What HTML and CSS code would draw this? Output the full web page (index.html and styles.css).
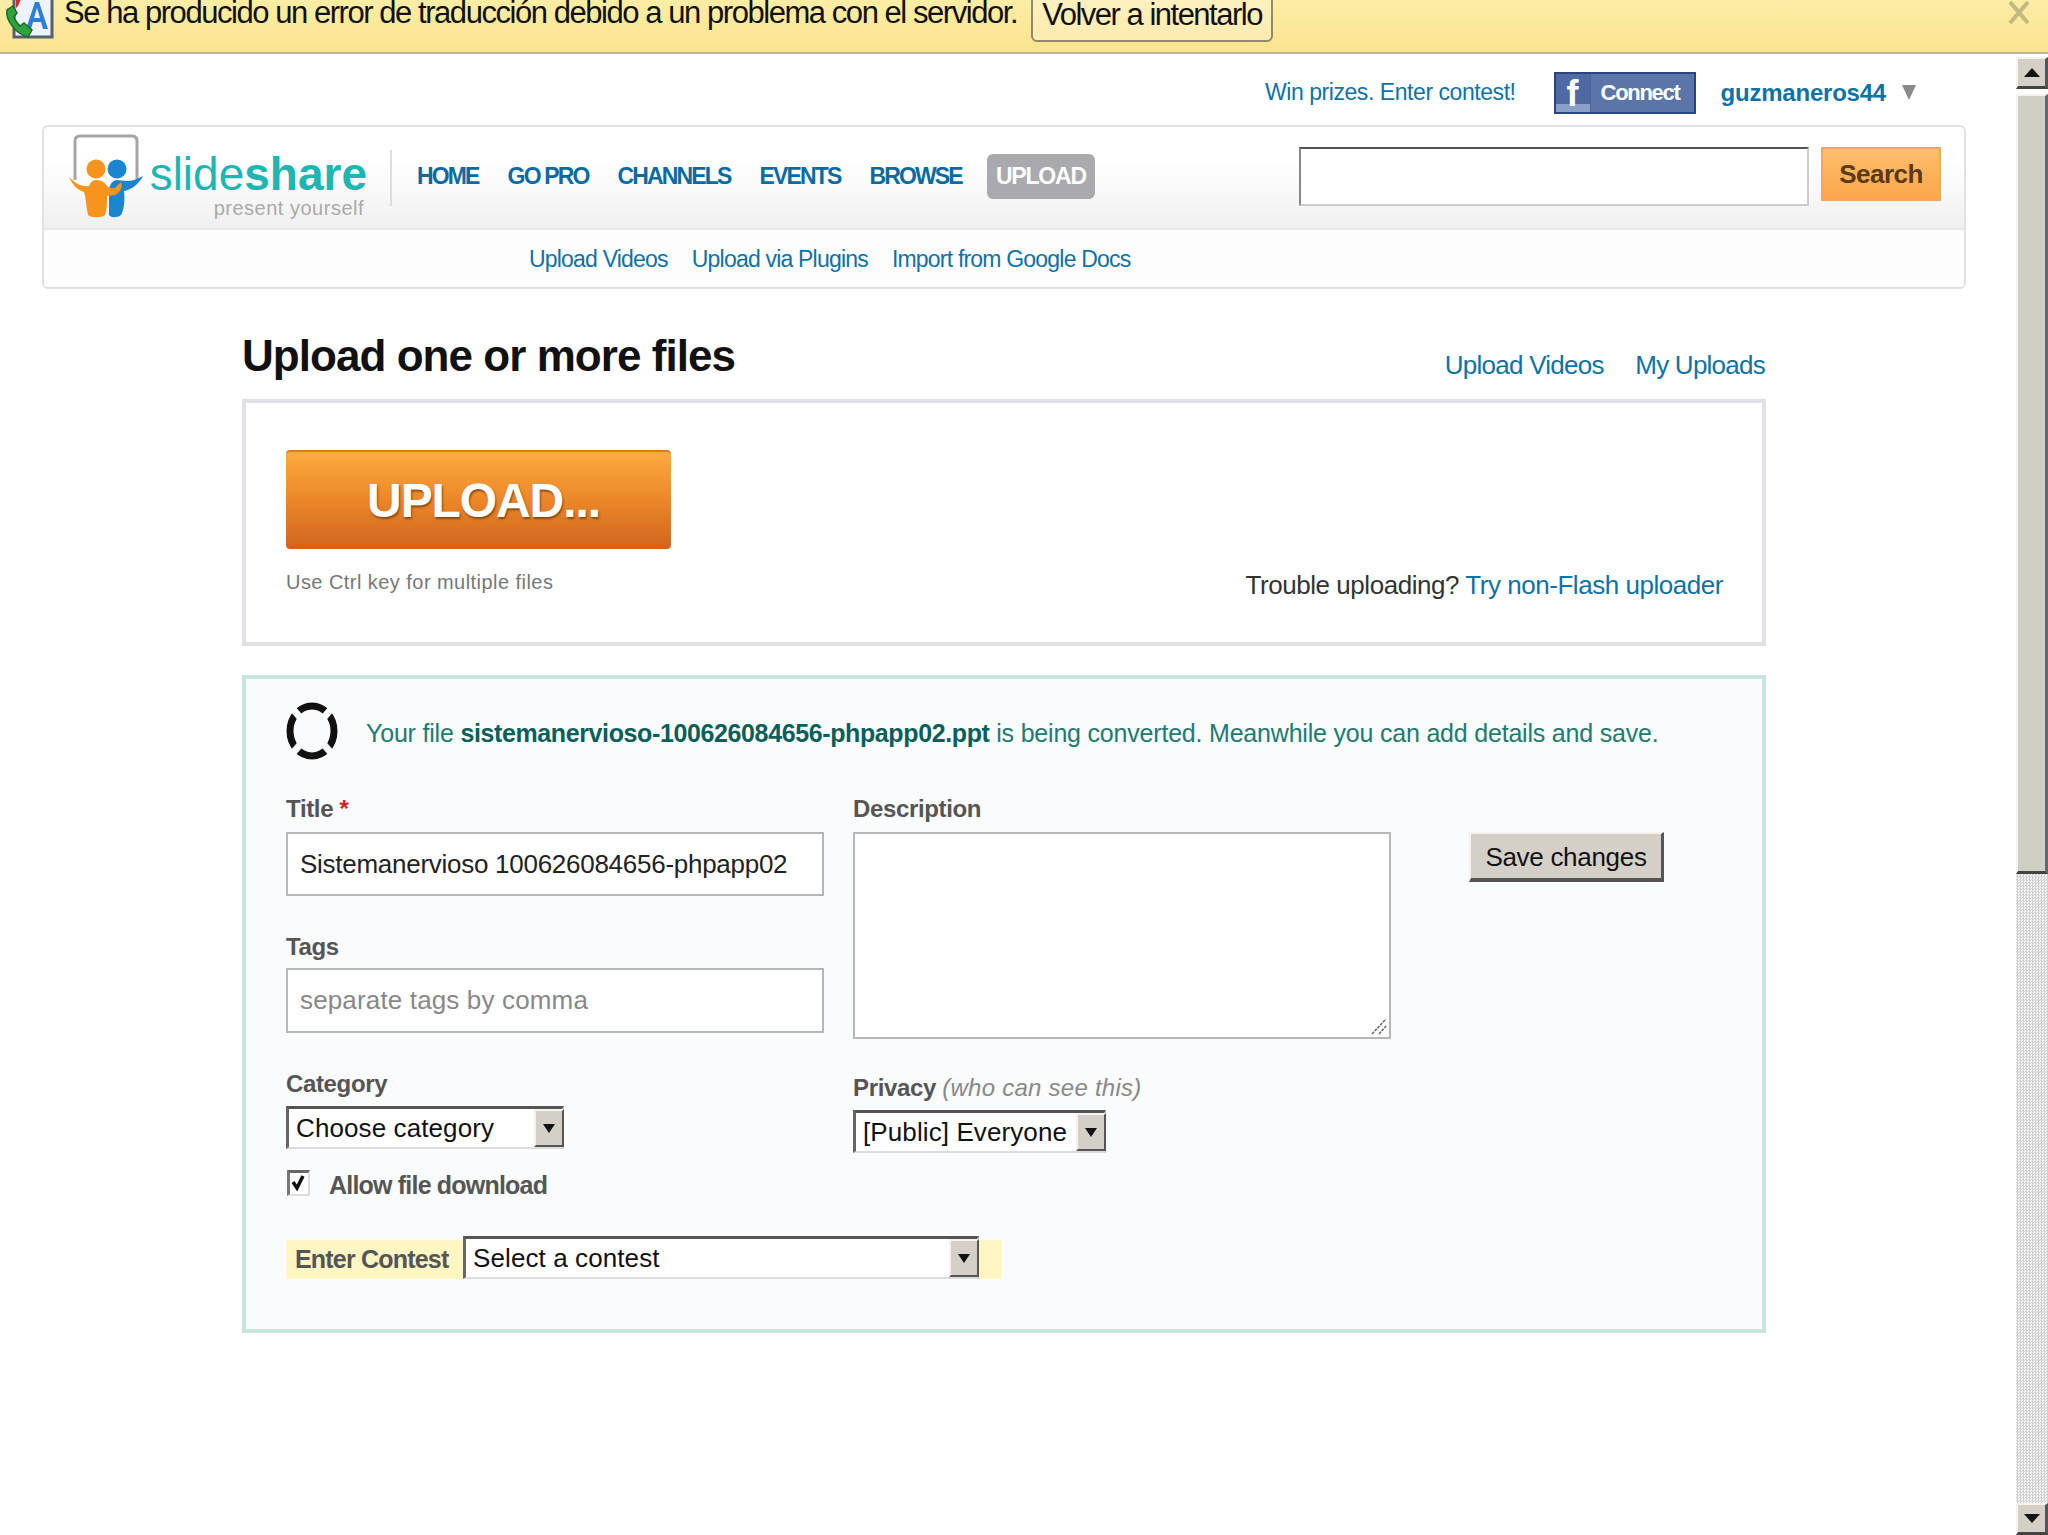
FILE: index.html
```html
<!DOCTYPE html>
<html lang="en">
<head>
    <meta charset="UTF-8">
    <title>Upload one or more files - SlideShare</title>
    <link rel="stylesheet" href="styles.css">
</head>
<body>
    <!-- Browser translation bar -->
    <div class="translate-bar">
        <svg class="translate-icon" width="50" height="46" viewBox="0 0 50 46">
            <rect x="10" y="-6" width="38" height="47" fill="#eef3fb" stroke="#56606e" stroke-width="3"/>
            <path d="M12 -4 L20 -4 L14 10 L12 12 Z" fill="#d22b2b"/>
            <path d="M22 33 L31 6 L35 6 L44 33 L39 33 L37 26 L29 26 L27 33 Z M30 22 L36 22 L33 12 Z" fill="#2f7fd6" fill-rule="evenodd"/>
            <path d="M3 14 C1 24 12 38 24 41 L28 34 L20 27 L16 30 C13 27 11 24 10 21 L13 17 L9 10 Z" fill="#2fa33b" stroke="#1c6a2b" stroke-width="1.5"/>
        </svg>
        <span class="translate-text">Se ha producido un error de traducción debido a un problema con el servidor.</span>
        <span class="translate-retry">Volver a intentarlo</span>
        <svg class="translate-close" width="22" height="24" viewBox="0 0 22 24">
            <path d="M2 2 L20 23 M20 2 L2 23" stroke="#c2b983" stroke-width="4"/>
        </svg>
    </div>

    <div class="window">
        <div class="page">
            <div class="user-bar">
                <a class="contest-link">Win prizes. Enter contest!</a>
                <span class="fb-connect">
                    <span class="fb-logo">f</span>
                    <span class="fb-label">Connect</span>
                </span>
                <a class="user-name">guzmaneros44</a>
                <span class="user-arrow"></span>
            </div>

            <div class="site-header">
                <div class="header-main">
                    <svg class="logo-mark" width="74" height="86" viewBox="0 0 74 86">
                        <path d="M6 46 L6 7 Q6 2 11 2 L63 2 Q68 2 68 7 L68 46" fill="#fff" stroke="#a6a6a6" stroke-width="3"/>
                        <circle cx="27" cy="35" r="9.5" fill="#f7941e"/>
                        <circle cx="48" cy="35" r="9.5" fill="#1a86cf"/>
                        <path d="M74 42 C70 50 62 56 55 57 C56 66 55 76 52 81 C48 84 42 84 40 81 L40 58 C40 50 44 46 48 46 C54 46 60 50 74 42 Z" fill="#1a86cf"/>
                        <path d="M0 43 C8 51 14 53 20 52 C22 47 25 46 27 46 C33 46 36 49 38 52 C42 55 46 55 48 52 L52 48 C54 52 52 58 46 61 L38 62 C38 68 38 76 36 81 C32 84 22 84 19 81 C17 72 17 64 15 58 C8 56 3 50 0 43 Z" fill="#f7941e"/>
                    </svg>
                    <div class="logo-text">
                        <div class="logo-name">slide<b>share</b></div>
                        <div class="logo-tag">present yourself</div>
                    </div>
                    <div class="header-sep"></div>
                    <nav class="main-nav">
                        <a>HOME</a>
                        <a>GO PRO</a>
                        <a>CHANNELS</a>
                        <a>EVENTS</a>
                        <a>BROWSE</a>
                        <a class="nav-upload">UPLOAD</a>
                    </nav>
                    <input class="search-input" type="text">
                    <span class="search-btn">Search</span>
                </div>
                <div class="sub-nav">
                    <a>Upload Videos</a>
                    <a>Upload via Plugins</a>
                    <a>Import from Google Docs</a>
                </div>
            </div>

            <div class="content">
                <div class="title-row">
                    <h1>Upload one or more files</h1>
                    <div class="title-links">
                        <a>Upload Videos</a>
                        <a>My Uploads</a>
                    </div>
                </div>

                <div class="upload-box">
                    <div>
                        <div class="upload-btn">UPLOAD...</div>
                        <div class="upload-hint">Use Ctrl key for multiple files</div>
                    </div>
                    <div class="upload-trouble">Trouble uploading? <a>Try non-Flash uploader</a></div>
                </div>

                <div class="details-box">
                    <div class="notice">
                        <svg class="spinner" width="52" height="58" viewBox="0 0 52 58">
                            <ellipse cx="26" cy="29" rx="22" ry="25" fill="none" stroke="#111" stroke-width="7"/>
                            <path d="M6 6 L18 20 M46 6 L34 20 M6 52 L18 38 M46 52 L34 38" stroke="#f9fbfd" stroke-width="7"/>
                        </svg>
                        <span class="notice-text">Your file <b>sistemanervioso-100626084656-phpapp02.ppt</b> is being converted. Meanwhile you can add details and save.</span>
                    </div>

                    <div class="form-columns">
                        <div class="col-left">
                            <label class="field-label">Title <span class="required">*</span></label>
                            <input class="text-input" type="text" value="Sistemanervioso 100626084656-phpapp02">
                            <label class="field-label tags-label">Tags</label>
                            <input class="text-input tags-input" type="text" placeholder="separate tags by comma">
                            <label class="field-label category-label">Category</label>
                            <div class="select category-select">
                                <span class="select-value">Choose category</span>
                                <span class="select-arrow"></span>
                            </div>
                            <div class="check-row">
                                <span class="checkbox">
                                    <svg width="18" height="20" viewBox="0 0 18 20"><path d="M3 9 L7 15 L13 3" fill="none" stroke="#111" stroke-width="3.5"/></svg>
                                </span>
                                <span class="check-label">Allow file download</span>
                            </div>
                        </div>
                        <div class="col-right">
                            <label class="field-label">Description</label>
                            <div class="desc-wrap">
                                <textarea class="desc-input"></textarea>
                                <svg class="desc-grip" width="18" height="18" viewBox="0 0 18 18">
                                    <path d="M2 16 L16 1 M9 16 L16 8" stroke="#666" stroke-width="1.5" stroke-dasharray="3 1"/>
                                </svg>
                            </div>
                            <label class="field-label privacy-label">Privacy <i>(who can see this)</i></label>
                            <div class="select privacy-select">
                                <span class="select-value">[Public] Everyone</span>
                                <span class="select-arrow"></span>
                            </div>
                        </div>
                        <div class="col-save">
                            <span class="save-btn">Save changes</span>
                        </div>
                    </div>

                    <div class="contest-row">
                        <span class="contest-label">Enter Contest</span>
                        <div class="select contest-select">
                            <span class="select-value">Select a contest</span>
                            <span class="select-arrow"></span>
                        </div>
                    </div>
                </div>
            </div>
        </div>

        <!-- Classic window scrollbar -->
        <div class="scrollbar">
            <div class="scroll-btn"><span class="arrow-up"></span></div>
            <div class="scroll-thumb"></div>
            <div class="scroll-track"></div>
            <div class="scroll-btn"><span class="arrow-down"></span></div>
        </div>
    </div>
</body>
</html>
```

FILE: styles.css
```css
/* Page frame */
html, body {
    height: 100%;
}

body {
    margin: 0;
    overflow: hidden;
    background-color: #fff;
    font-family: "Liberation Sans", Arial, sans-serif;
    color: #333;
    display: flex;
    flex-direction: column;
}

a {
    color: #0f72a5;
    text-decoration: none;
}

/* Translation bar */
.translate-bar {
    height: 52px;
    flex: none;
    display: flex;
    align-items: flex-start;
    overflow: hidden;
    background: linear-gradient(#fdeda5, #fbe48f);
    border-bottom: 2px solid #bdb9a0;
}

.translate-icon {
    flex: none;
    margin: -4px 0 0 4px;
}

.translate-text {
    margin: -6px 0 0 10px;
    font-size: 31px;
    line-height: 38px;
    letter-spacing: -1.45px;
    color: #111;
    white-space: nowrap;
}

.translate-retry {
    flex: none;
    box-sizing: border-box;
    width: 242px;
    height: 52px;
    margin: -10px 0 0 14px;
    padding-top: 4px;
    text-align: center;
    font-size: 31px;
    line-height: 38px;
    letter-spacing: -1.5px;
    color: #111;
    white-space: nowrap;
    background: linear-gradient(#fff3c2, #fdebb0);
    border: 2px solid #8f8a6c;
    border-radius: 6px;
}

.translate-close {
    margin: 0 18px 0 auto;
}

/* Window below the bar */
.window {
    flex: 1;
    display: flex;
    min-height: 0;
}

.page {
    flex: 1;
    min-width: 0;
}

/* User bar */
.user-bar {
    box-sizing: border-box;
    height: 71px;
    display: flex;
    align-items: center;
    justify-content: flex-end;
    padding: 6px 100px 0 0;
}

.contest-link {
    font-size: 23px;
    letter-spacing: -0.44px;
}

.fb-connect {
    display: flex;
    box-sizing: border-box;
    width: 142px;
    height: 42px;
    margin-left: 38px;
    color: #fff;
    background-color: #5c75a9;
    border: 2px solid #29447e;
}

.fb-logo {
    width: 35px;
    box-sizing: border-box;
    padding: 2px 0 0 11px;
    font-size: 36px;
    line-height: 36px;
    font-weight: bold;
    background: linear-gradient(#4f6aa3 78%, #8c9fc6 78%);
    border-right: 1px solid #4a649c;
}

.fb-label {
    padding-left: 10px;
    font-size: 22px;
    line-height: 38px;
    font-weight: bold;
    letter-spacing: -1.3px;
    white-space: nowrap;
}

.user-name {
    margin-left: 25px;
    font-size: 24px;
    font-weight: bold;
    letter-spacing: -0.22px;
}

.user-arrow {
    width: 0;
    height: 0;
    margin-left: 16px;
    border-left: 7px solid transparent;
    border-right: 7px solid transparent;
    border-top: 15px solid #8a8a8a;
}

/* Site header */
.site-header {
    margin: 0 50px 0 42px;
    border: 2px solid #e2e2e2;
    border-radius: 6px;
}

.header-main {
    height: 101px;
    display: flex;
    align-items: center;
    padding-left: 24px;
    background: linear-gradient(#fff 35%, #f0f0f0);
    border-bottom: 2px solid #e8e8e8;
    border-radius: 6px 6px 0 0;
}

.logo-mark {
    flex: none;
    align-self: flex-start;
    margin: 7px 0 0 1px;
}

.logo-text {
    width: 218px;
    margin: 15px 0 0 6px;
    text-align: right;
}

.logo-name {
    font-size: 46px;
    line-height: 45px;
    color: #1fb5b0;
}

.logo-tag {
    padding-right: 3px;
    font-size: 20px;
    line-height: 22px;
    letter-spacing: 0.5px;
    color: #aaa;
}

.header-sep {
    width: 2px;
    height: 56px;
    margin: 0 0 0 23px;
    background-color: #dedede;
}

.main-nav {
    display: flex;
    align-items: center;
    margin: -2px 0 0 25px;
}

.main-nav a {
    margin-right: 29px;
    font-size: 23px;
    font-weight: bold;
    letter-spacing: -1.85px;
    color: #0b6aa0;
}

.main-nav .nav-upload {
    box-sizing: border-box;
    width: 108px;
    height: 45px;
    margin: 0 0 0 -4px;
    text-align: center;
    line-height: 45px;
    letter-spacing: -1.2px;
    color: #fff;
    background-color: #aaaaae;
    border-radius: 6px;
}

.search-input {
    box-sizing: border-box;
    width: 510px;
    height: 59px;
    margin: -2px 0 0 auto;
    padding: 0;
    background-color: #fff;
    border-width: 2px;
    border-style: solid;
    border-color: #555 #ccc #ccc #888;
    outline: none;
}

.search-btn {
    box-sizing: border-box;
    width: 120px;
    height: 54px;
    margin: -7px 23px 0 12px;
    text-align: center;
    font-size: 26px;
    line-height: 50px;
    font-weight: bold;
    letter-spacing: -0.5px;
    color: #5a3a14;
    background: linear-gradient(#ffbe6e, #fca64b);
    border: 2px solid #f0a860;
}

.sub-nav {
    box-sizing: border-box;
    height: 57px;
    display: flex;
    align-items: center;
    padding: 2px 0 0 485px;
    background-color: #fdfdfe;
    border-radius: 0 0 6px 6px;
}

.sub-nav a {
    margin-right: 24px;
    font-size: 23px;
    letter-spacing: -0.8px;
}

/* Main content */
.content {
    margin: 0 250px 0 242px;
}

.title-row {
    height: 110px;
    display: flex;
    align-items: center;
    justify-content: space-between;
}

h1 {
    margin: 24px 0 0;
    font-size: 44px;
    font-weight: bold;
    letter-spacing: -0.95px;
    color: #111;
}

.title-links {
    margin: 42px 1px 0 0;
    font-size: 26px;
    letter-spacing: -0.75px;
}

.title-links a {
    margin-left: 25px;
}

.upload-box {
    box-sizing: border-box;
    height: 247px;
    display: flex;
    justify-content: space-between;
    padding: 47px 39px 0 40px;
    border: 4px solid #e1e1e5;
}

.upload-btn {
    box-sizing: border-box;
    width: 385px;
    height: 99px;
    padding-left: 10px;
    text-align: center;
    font-size: 48px;
    line-height: 97px;
    font-weight: bold;
    letter-spacing: -1.1px;
    color: #fff;
    text-shadow: 1px 2px 2px #8a4a10;
    background: linear-gradient(#fdab3f, #ed8a2a 45%, #d0641f);
    border-top: 2px solid #d87c2c;
    border-radius: 4px;
}

.upload-hint {
    margin-top: 21px;
    font-size: 20px;
    line-height: 24px;
    letter-spacing: 0.45px;
    color: #777;
}

.upload-trouble {
    align-self: flex-end;
    margin-bottom: 41px;
    font-size: 26px;
    letter-spacing: -0.46px;
    color: #333;
}

.details-box {
    box-sizing: border-box;
    height: 658px;
    margin-top: 29px;
    padding: 23px 40px 0;
    background-color: #f9fbfd;
    border: 4px solid #c6e5df;
}

.notice {
    height: 58px;
    display: flex;
    align-items: center;
}

.spinner {
    flex: none;
}

.notice-text {
    margin: 5px 0 0 28px;
    font-size: 25px;
    letter-spacing: -0.2px;
    color: #227a70;
    white-space: nowrap;
}

.notice-text b {
    color: #0b5f5a;
    letter-spacing: -0.38px;
}

.form-columns {
    display: flex;
    margin-top: 36px;
}

.col-left {
    width: 538px;
}

.col-right {
    width: 538px;
    margin-left: 29px;
}

.col-save {
    margin: 36px 0 0 78px;
}

.field-label {
    display: block;
    height: 26px;
    margin-bottom: 10px;
    font-size: 24px;
    line-height: 26px;
    font-weight: bold;
    letter-spacing: -0.35px;
    color: #555;
}

.field-label i {
    font-weight: normal;
    letter-spacing: 0.25px;
    color: #888;
}

.required {
    color: #d02020;
}

.text-input {
    display: block;
    box-sizing: border-box;
    width: 538px;
    height: 64px;
    padding: 0 12px;
    font-family: "Liberation Sans", Arial, sans-serif;
    font-size: 26px;
    letter-spacing: -0.27px;
    color: #222;
    background-color: #fff;
    border: 2px solid #b5b8bb;
    outline: none;
}

.text-input::placeholder {
    color: #888;
    letter-spacing: 0.15px;
    opacity: 1;
}

.tags-label {
    margin: 38px 0 8px;
}

.tags-input {
    height: 65px;
}

.category-label {
    margin: 38px 0 9px;
}

.desc-wrap {
    position: relative;
}

.desc-input {
    display: block;
    box-sizing: border-box;
    width: 538px;
    height: 207px;
    resize: none;
    background-color: #fff;
    border: 2px solid #b5b8bb;
    outline: none;
}

.desc-grip {
    position: absolute;
    right: 3px;
    bottom: 3px;
}

.privacy-label {
    margin: 36px 0 9px;
}

/* Old style select boxes */
.select {
    box-sizing: border-box;
    height: 43px;
    display: flex;
    background-color: #fff;
    border-width: 3px 2px 2px 3px;
    border-style: solid;
    border-color: #555 #ccc #ddd #666;
}

.select-value {
    flex: 1;
    min-width: 0;
    padding-left: 7px;
    font-size: 26px;
    line-height: 38px;
    letter-spacing: 0.1px;
    color: #111;
    white-space: nowrap;
}

.select-arrow {
    flex: none;
    box-sizing: border-box;
    width: 30px;
    margin-right: -2px;
    display: flex;
    align-items: center;
    justify-content: center;
    background-color: #d4d0c8;
    border-width: 2px;
    border-style: solid;
    border-color: #f4f3ef #555 #555 #f4f3ef;
}

.select-arrow::after {
    content: "";
    border-left: 6px solid transparent;
    border-right: 6px solid transparent;
    border-top: 9px solid #111;
}

.category-select {
    width: 278px;
}

.privacy-select {
    width: 253px;
}

.contest-select {
    width: 516px;
    margin: -4px 0 0 0;
}

.check-row {
    display: flex;
    align-items: center;
    margin-top: 22px;
}

.checkbox {
    box-sizing: border-box;
    width: 23px;
    height: 26px;
    margin: -5px 0 0 1px;
    background-color: #fff;
    border-width: 3px 2px 2px 3px;
    border-style: solid;
    border-color: #666 #ddd #ddd #777;
}

.checkbox svg {
    display: block;
}

.check-label {
    margin-left: 19px;
    font-size: 25px;
    font-weight: bold;
    letter-spacing: -0.8px;
    color: #555;
}

.contest-row {
    width: 716px;
    height: 39px;
    display: flex;
    margin-top: 40px;
    background-color: #fff6c4;
}

.contest-label {
    width: 177px;
    padding-left: 9px;
    box-sizing: border-box;
    font-size: 25px;
    line-height: 39px;
    font-weight: bold;
    letter-spacing: -0.8px;
    color: #555;
    white-space: nowrap;
}

.save-btn {
    display: block;
    box-sizing: border-box;
    width: 195px;
    height: 50px;
    text-align: center;
    font-size: 26px;
    line-height: 46px;
    letter-spacing: -0.3px;
    color: #111;
    background-color: #d4d0c8;
    border-width: 2px 3px 4px 2px;
    border-style: solid;
    border-color: #f4f3ef #555 #555 #f4f3ef;
}

/* Scrollbar */
.scrollbar {
    width: 32px;
    flex: none;
    display: flex;
    flex-direction: column;
    padding-top: 3px;
    box-sizing: border-box;
}

.scroll-btn {
    box-sizing: border-box;
    height: 32px;
    flex: none;
    display: flex;
    align-items: center;
    justify-content: center;
    background-color: #d4d0c8;
    border-width: 2px 3px 3px 2px;
    border-style: solid;
    border-color: #f4f3ef #555 #444 #f4f3ef;
}

.arrow-up {
    border-left: 8px solid transparent;
    border-right: 8px solid transparent;
    border-bottom: 9px solid #111;
}

.arrow-down {
    border-left: 8px solid transparent;
    border-right: 8px solid transparent;
    border-top: 9px solid #111;
}

.scroll-thumb {
    box-sizing: border-box;
    height: 780px;
    flex: none;
    margin-top: 5px;
    background-color: #d0cfc6;
    border-width: 2px 3px 3px 2px;
    border-style: solid;
    border-color: #f4f3ef #666 #444 #f4f3ef;
}

.scroll-track {
    flex: 1;
    background: repeating-conic-gradient(#cfcfcf 0 25%, #f6f6f6 0 50%) 0 0 / 3px 3px;
}
```
